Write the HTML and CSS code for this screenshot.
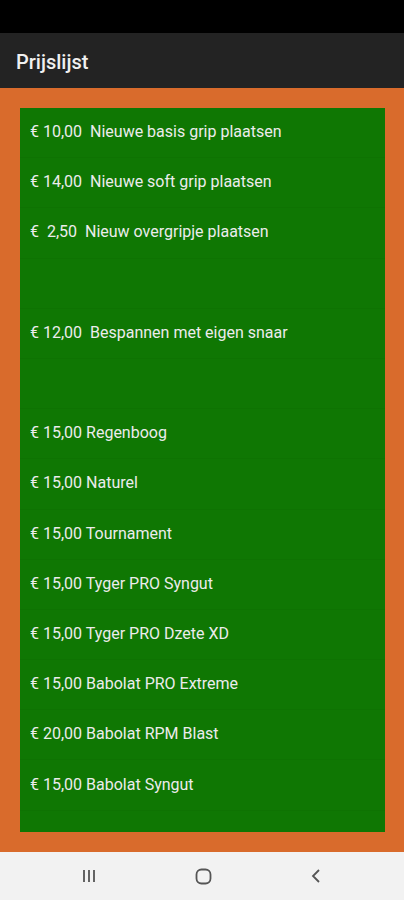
FILE: index.html
```html
<!DOCTYPE html>
<html lang="nl">

<head>
  <meta charset="UTF-8" />
  <meta name="viewport" content="width=device-width, initial-scale=1.0" />
  <title>Prijslijst</title>

  <link rel="stylesheet" href="styles.css">
</head>

<body>

  <div class="statusbar"></div>

  <header class="appbar">
    <h1>Prijslijst</h1>
  </header>

  <main class="content">
    <ul class="pricelist">
      <li>€ 10,00&nbsp; Nieuwe basis grip plaatsen</li>
      <li>€ 14,00&nbsp; Nieuwe soft grip plaatsen</li>
      <li>€ &nbsp;2,50&nbsp; Nieuw overgripje plaatsen</li>
      <li></li>
      <li>€ 12,00&nbsp; Bespannen met eigen snaar</li>
      <li></li>
      <li>€ 15,00 Regenboog</li>
      <li>€ 15,00 Naturel</li>
      <li>€ 15,00 Tournament</li>
      <li>€ 15,00 Tyger PRO Syngut</li>
      <li>€ 15,00 Tyger PRO Dzete XD</li>
      <li>€ 15,00 Babolat PRO Extreme</li>
      <li>€ 20,00 Babolat RPM Blast</li>
      <li>€ 15,00 Babolat Syngut</li>
    </ul>
  </main>

  <nav class="navbar">
    <svg width="16" height="14" viewBox="0 0 16 14">
      <path d="M3 1v12M8 1v12M13 1v12" stroke="#555" stroke-width="1.8" fill="none" />
    </svg>
    <svg width="17" height="17" viewBox="0 0 17 17">
      <rect x="1.5" y="1.5" width="14" height="14" rx="5" stroke="#555" stroke-width="1.8" fill="none" />
    </svg>
    <svg width="12" height="16" viewBox="0 0 12 16">
      <path d="M9 2L3 8l6 6" stroke="#555" stroke-width="1.8" fill="none" />
    </svg>
  </nav>

</body>

</html>
```

FILE: styles.css
```css
body {
  margin: 0;
  width: 404px;
  height: 900px;
  display: flex;
  flex-direction: column;
  font-family: Roboto, "Liberation Sans", sans-serif;
  background: #d96b2c;
}

.statusbar {
  height: 33px;
  background: #000;
}

.appbar {
  height: 55px;
  box-sizing: border-box;
  padding: 3px 16px 0;
  background: #232323;
  display: flex;
  align-items: center;
}

.appbar h1 {
  margin: 0;
  font-size: 20px;
  font-weight: 500;
  color: #f0f0f0;
}

.content {
  flex: 1;
  padding: 20px 19px 20px 20px;
}

.pricelist {
  list-style: none;
  margin: 0;
  padding: 0 0 21px 0;
  background: #0f7703;
}

.pricelist li {
  height: 50.2px;
  box-sizing: border-box;
  padding: 0 10px 2px;
  display: flex;
  align-items: center;
  font-size: 16px;
  color: #ececec;
  border-bottom: 1px solid rgba(0, 0, 0, 0.03);
  white-space: pre;
}

.navbar {
  height: 48px;
  background: #f2f2f2;
  display: flex;
  align-items: center;
  justify-content: space-between;
  padding: 0 82px 0 81px;
}
```
